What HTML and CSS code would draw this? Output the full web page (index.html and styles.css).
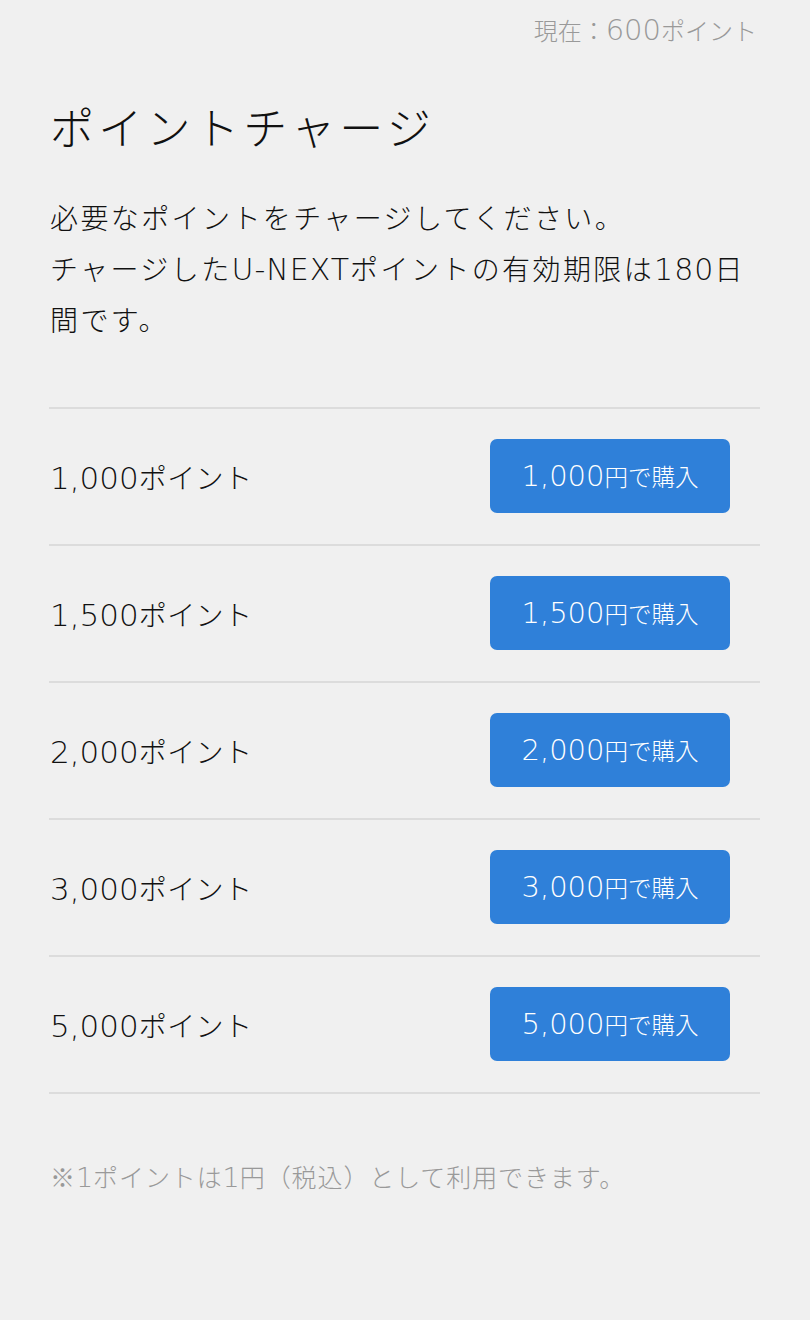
FILE: index.html
```html
<!DOCTYPE html>
<html lang="ja">
<head>
<meta charset="utf-8">
<link rel="stylesheet" href="styles.css">
</head>
<body>
<div class="page">
  <div class="balance">現在：<span class="num">600</span>ポイント</div>
  <h1 class="title">ポイントチャージ</h1>
  <p class="desc">必要なポイントをチャージしてください。<br>チャージした<span class="num">U-NEXT</span>ポイントの有効期限は<span class="num">180</span>日間です。</p>
  <ul class="list">
    <li class="row"><span class="label"><span class="num">1,000</span>ポイント</span><button class="buy"><span class="num">1,000</span>円で購入</button></li>
    <li class="row"><span class="label"><span class="num">1,500</span>ポイント</span><button class="buy"><span class="num">1,500</span>円で購入</button></li>
    <li class="row"><span class="label"><span class="num">2,000</span>ポイント</span><button class="buy"><span class="num">2,000</span>円で購入</button></li>
    <li class="row"><span class="label"><span class="num">3,000</span>ポイント</span><button class="buy"><span class="num">3,000</span>円で購入</button></li>
    <li class="row"><span class="label"><span class="num">5,000</span>ポイント</span><button class="buy"><span class="num">5,000</span>円で購入</button></li>
  </ul>
  <p class="note">※<span class="num">1</span>ポイントは<span class="num">1</span>円（税込）として利用できます。</p>
</div>
</body>
</html>
```

FILE: styles.css
```css
html, body {
  margin: 0;
  padding: 0;
  background: #f0f0f0;
}
body {
  font-family: "Noto Sans CJK JP", sans-serif;
  color: #111;
}
.num {
  font-family: "DejaVu Sans", "Noto Sans CJK JP", sans-serif;
  font-weight: 200;
  line-height: 1;
}
.page {
  width: 711px;
  padding: 0 50px 0 49px;
}
.balance {
  text-align: right;
  font-size: 24px;
  line-height: 32px;
  padding-top: 14px;
  color: #999;
  padding-right: 3px;
  font-weight: 300;
}
.balance .num {
  font-size: 29px;
}
.title {
  margin: 50px 0 0 1px;
  font-size: 44px;
  line-height: 60px;
  font-weight: 300;
  letter-spacing: 4.3px;
}
.desc {
  margin: 36px 0 0 1px;
  font-size: 28px;
  line-height: 51px;
  font-weight: 300;
  letter-spacing: 2.4px;
}
.desc .num {
  font-size: 30px;
  letter-spacing: 1px;
}
.list {
  list-style: none;
  margin: 62px 0 0;
  padding: 0;
  border-top: 2px solid #dcdcdc;
}
.row {
  display: flex;
  align-items: center;
  justify-content: space-between;
  height: 135px;
  border-bottom: 2px solid #dcdcdc;
  padding: 0 30px 0 1px;
}
.label {
  font-size: 28px;
  font-weight: 300;
  letter-spacing: 0.4px;
}
.label .num {
  font-size: 31px;
  letter-spacing: 0;
}
.buy {
  width: 240px;
  height: 74px;
  margin-top: -2px;
  border: none;
  border-radius: 7px;
  background: #2f80d9;
  color: #fff;
  font-family: inherit;
  font-size: 23.5px;
  font-weight: 300;
  padding: 0;
}
.buy .num {
  font-size: 29px;
}
.note {
  margin: 66px 0 0 1px;
  font-size: 25px;
  line-height: 32px;
  color: #999;
  font-weight: 300;
  letter-spacing: 0.9px;
}
.note .num {
  font-size: 27px;
  letter-spacing: 0;
}
```
